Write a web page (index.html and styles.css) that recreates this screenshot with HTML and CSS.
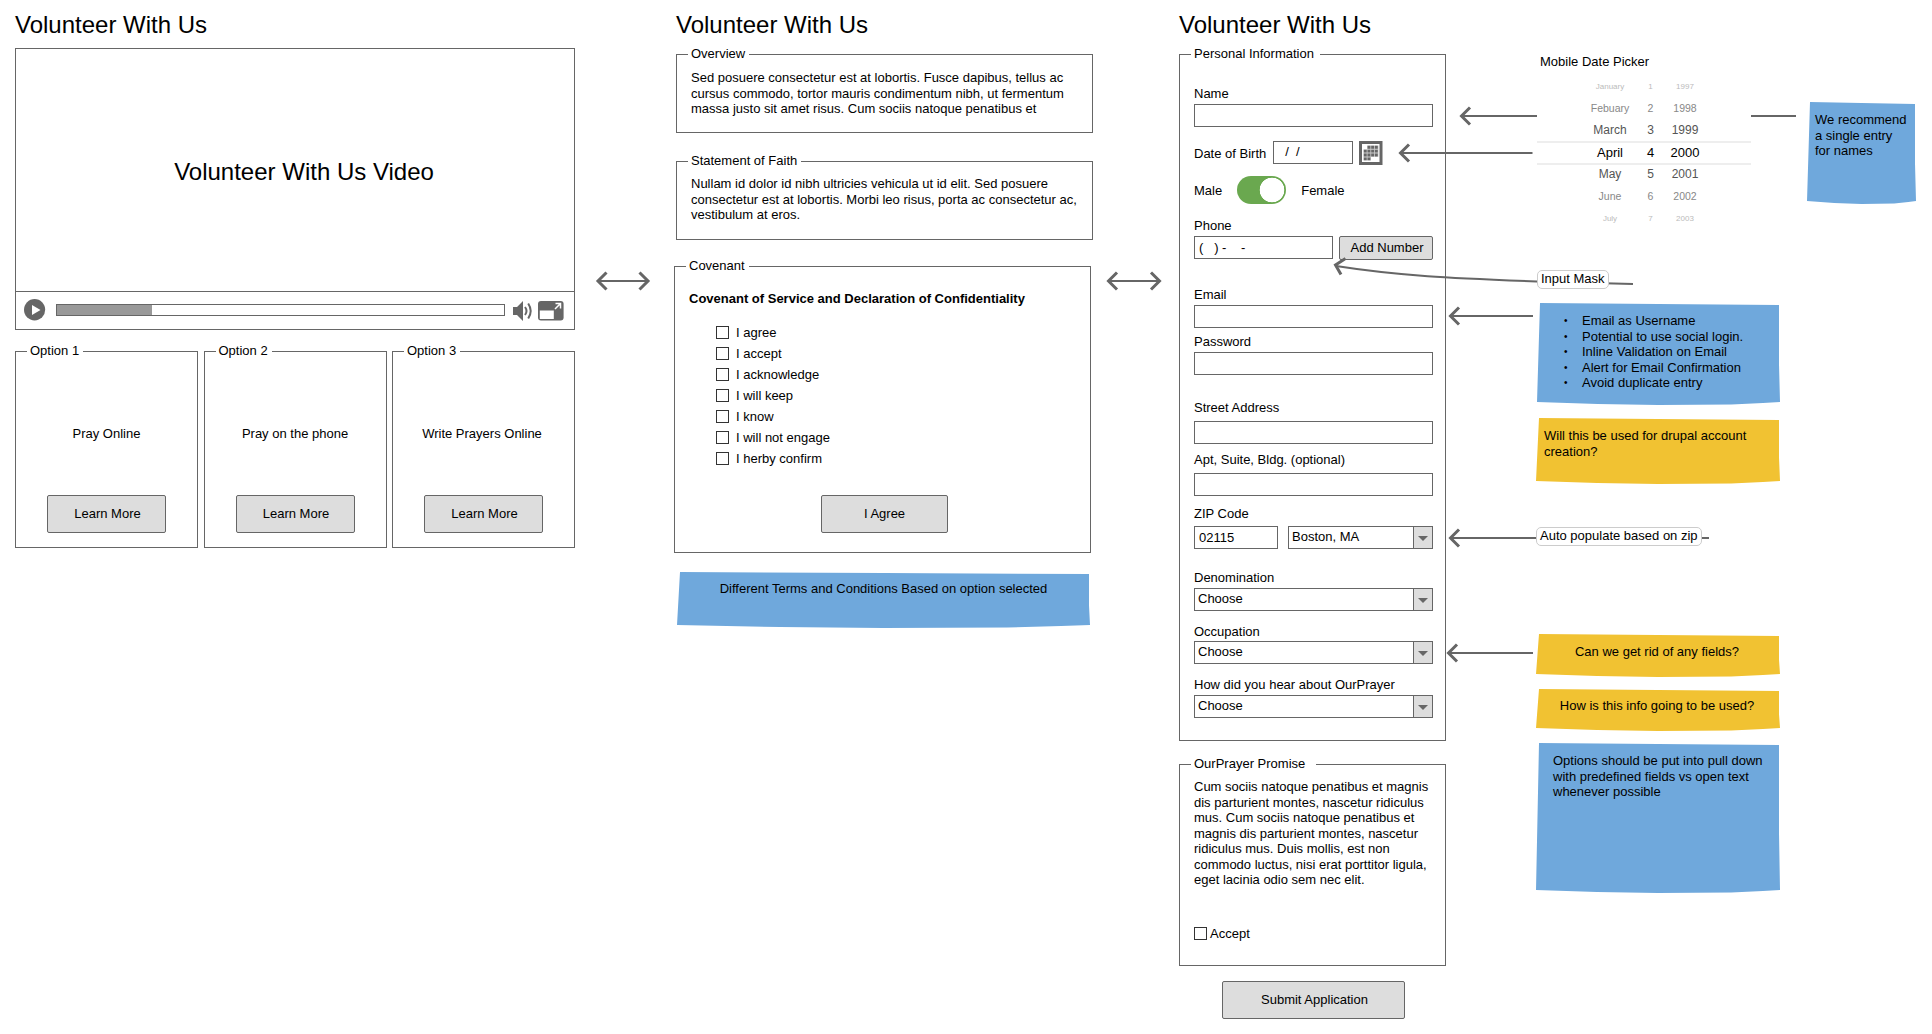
FILE: index.html
```html
<!DOCTYPE html>
<html lang="en">
<head>
<meta charset="utf-8">
<title>Volunteer With Us</title>
<link rel="stylesheet" href="styles.css">
</head>
<body>
<main class="board">

  <section class="col">
    <h1 class="title">Volunteer With Us</h1>
    <div class="video">
      <div class="video-screen">Volunteer With Us Video</div>
      <div class="video-bar">
        <svg class="play" width="22" height="22" viewBox="0 0 22 22"><ellipse cx="10.600" cy="10.700" rx="10.6" ry="10.7" fill="#666"/><path d="M8 6l8.5 5L8 16z" fill="#fff"/></svg>
        <div class="progress"><div class="progress-fill"></div></div>
        <svg class="speaker" width="21" height="20" viewBox="0 0 21 20"><path d="M0 6h4l6-6v20l-6-6H0z" fill="#666"/><path d="M12 6q3 4 0 8M15.200 2.500q5 7.500 0 15" fill="none" stroke="#666" stroke-width="2"/></svg>
        <svg class="expand" width="26" height="20" viewBox="0 0 26 20"><rect x="0" y="0" width="25.600" height="19.500" rx="3" fill="#666"/><path d="M1.800 9.500h14v8.500h-14z" fill="#fff"/><path d="M17.500 2.500h5v5M22 3l-5 5" fill="none" stroke="#fff" stroke-width="1.500"/></svg>
      </div>
    </div>
    <div class="options">
      <div class="frame option"><span class="legend">Option 1</span><p>Pray Online</p><button class="btn">Learn More</button></div>
      <div class="frame option"><span class="legend">Option 2</span><p>Pray on the phone</p><button class="btn">Learn More</button></div>
      <div class="frame option"><span class="legend">Option 3</span><p class="nudge">Write Prayers Online</p><button class="btn">Learn More</button></div>
    </div>
  </section>

  <section class="col">
    <h1 class="title title-mid">Volunteer With Us</h1>
    <div class="frame overview"><span class="legend">Overview</span>
      <p class="para">Sed posuere consectetur est at lobortis. Fusce dapibus, tellus ac<br>cursus commodo, tortor mauris condimentum nibh, ut fermentum<br>massa justo sit amet risus. Cum sociis natoque penatibus et</p>
    </div>
    <div class="frame faith"><span class="legend">Statement of Faith</span>
      <p class="para">Nullam id dolor id nibh ultricies vehicula ut id elit. Sed posuere<br>consectetur est at lobortis. Morbi leo risus, porta ac consectetur ac,<br>vestibulum at eros.</p>
    </div>
    <div class="frame covenant"><span class="legend">Covenant</span>
      <h2 class="covenant-title">Covenant of Service and Declaration of Confidentiality</h2>
      <ul class="checks">
        <li><i class="box"></i>I agree</li>
        <li><i class="box"></i>I accept</li>
        <li><i class="box"></i>I acknowledge</li>
        <li><i class="box"></i>I will keep</li>
        <li><i class="box"></i>I know</li>
        <li><i class="box"></i>I will not engage</li>
        <li><i class="box"></i>I herby confirm</li>
      </ul>
      <button class="btn btn-agree">I Agree</button>
    </div>
    <div class="note blue note-terms">Different Terms and Conditions Based on option selected</div>
  </section>

  <section class="col">
    <h1 class="title title-form">Volunteer With Us</h1>
    <div class="frame form"><span class="legend">Personal Information</span>
      <label>Name</label>
      <div class="input"></div>
      <div class="row dob">
        <label>Date of Birth</label>
        <div class="input date">  /  /</div>
        <svg class="calendar" width="24" height="24" viewBox="0 0 24 24"><rect x="1.500" y="1.500" width="20.500" height="21" fill="#fff" stroke="#666" stroke-width="3"/>
          <path d="M8.200 4.500h11.300v11.300h-7.500v3.700H4.500V8.300h3.700z" fill="#ccc"/>
          <path fill="#666" d="M8.500 4.800h2.900v2.900h-2.900zM12.200 4.800h2.900v2.900h-2.900zM15.900 4.800h2.900v2.900h-2.900zM4.800 8.700h2.900v2.900h-2.900zM8.500 8.700h2.900v2.900h-2.900zM12.200 8.700h2.900v2.900h-2.900zM15.900 8.700h2.900v2.900h-2.900zM4.800 12.600h2.900v2.900h-2.900zM8.500 12.600h2.900v2.900h-2.900zM12.200 12.600h2.900v2.900h-2.900zM15.900 12.600h2.900v2.900h-2.900zM4.800 16.400h2.900v2.900h-2.900zM8.500 16.400h2.900v2.900h-2.900z"/></svg>
      </div>
      <div class="row gender"><label>Male</label><div class="switch"></div><label>Female</label></div>
      <label>Phone</label>
      <div class="row phone"><div class="input">(   ) -    -</div><button class="btn btn-add">Add Number</button></div>
      <label class="l-email">Email</label>
      <div class="input"></div>
      <label class="l-password">Password</label>
      <div class="input"></div>
      <label class="l-street">Street Address</label>
      <div class="input roomy"></div>
      <label class="l-apt">Apt, Suite, Bldg. (optional)</label>
      <div class="input roomy"></div>
      <label class="l-zip">ZIP Code</label>
      <div class="row zip"><div class="input">02115</div><div class="select">Boston, MA<span class="drop"></span></div></div>
      <label class="l-denom">Denomination</label>
      <div class="select">Choose<span class="drop"></span></div>
      <label class="l-occ">Occupation</label>
      <div class="select tight">Choose<span class="drop"></span></div>
      <label class="l-occ">How did you hear about OurPrayer</label>
      <div class="select">Choose<span class="drop"></span></div>
    </div>
    <div class="frame promise"><span class="legend legend-wide">OurPrayer Promise</span>
      <p class="para">Cum sociis natoque penatibus et magnis<br>dis parturient montes, nascetur ridiculus<br>mus. Cum sociis natoque penatibus et<br>magnis dis parturient montes, nascetur<br>ridiculus mus. Duis mollis, est non<br>commodo luctus, nisi erat porttitor ligula,<br>eget lacinia odio sem nec elit.</p>
      <div class="accept"><i class="box"></i>Accept</div>
    </div>
    <button class="btn btn-submit">Submit Application</button>
  </section>

  <section class="col notes">
    <h3 class="picker-title">Mobile Date Picker</h3>
    <div class="picker">
      <div class="prow far"><span>January</span><span>1</span><span>1997</span></div>
      <div class="prow mid"><span>Febuary</span><span>2</span><span>1998</span></div>
      <div class="prow near"><span>March</span><span>3</span><span>1999</span></div>
      <div class="prow on"><span>April</span><span>4</span><span>2000</span></div>
      <div class="prow near"><span>May</span><span>5</span><span>2001</span></div>
      <div class="prow mid"><span>June</span><span>6</span><span>2002</span></div>
      <div class="prow far"><span>July</span><span>7</span><span>2003</span></div>
    </div>
    <div class="chip chip-mask">Input Mask</div>
    <div class="note blue note-email">
      <ul><li>Email as Username</li><li>Potential to use social login.</li><li>Inline Validation on Email</li><li>Alert for Email Confirmation</li><li>Avoid duplicate entry</li></ul>
    </div>
    <div class="note yellow note-drupal">Will this be used for drupal account<br>creation?</div>
    <div class="chip chip-zip">Auto populate based on zip</div>
    <div class="note yellow note-fields">Can we get rid of any fields?</div>
    <div class="note yellow note-info">How is this info going to be used?</div>
    <div class="note blue note-options">Options should be put into pull down<br>with predefined fields vs open text<br>whenever possible</div>
  </section>

  <section class="col">
    <div class="note blue note-names">We recommend<br>a single entry<br>for names</div>
  </section>

  <svg class="arrows" width="1932" height="1034" viewBox="0 0 1932 1034" fill="none" stroke="#666">
    <g stroke-width="2">
      <path d="M598 281h50M1109 281h51M1462 116h334M1401 153h131.500M1451 316h82M1451 538h258M1449 653h84"/>
      <path d="M1336 266C1400 276 1450 278 1537 281.500L1633 284"/>
    </g>
    <g stroke-width="3">
      <path d="M606.500 272.500L598 281l8.500 8.500M639.500 272.500L648 281l-8.500 8.500"/>
      <path d="M1117 272.500L1108.500 281l8.500 8.500M1151 272.500L1159.500 281l-8.500 8.500"/>
      <path d="M1470 107.500L1461.500 116l8.500 8.500M1409 144.500L1400.500 153l8.500 8.500"/>
      <path d="M1345.500 258.500L1335.500 265l5.500 9.500M1459 307.500L1450.500 316l8.500 8.500"/>
      <path d="M1459 529.500L1450.500 538l8.500 8.500M1457 644.500L1448.500 653l8.500 8.500"/>
    </g>
  </svg>
</main>
</body>
</html>
```
FILE: styles.css
```css
* { box-sizing: border-box; }
body { margin: 0; background: #fff; color: #000; font: 13px/15px "Liberation Sans", Arial, sans-serif; }
h1, h2, h3, p, ul { margin: 0; padding: 0; font-weight: normal; }
ul { list-style: none; }

.board {
  position: relative;
  display: grid;
  grid-template-columns: 659px 505px 357px 270px 1fr;
  width: 1932px;
  height: 1034px;
  padding-left: 15px;
  overflow: hidden;
  white-space: nowrap;
}
.col { display: flex; flex-direction: column; align-items: flex-start; }
.title { margin-top: 11px; font-size: 24px; line-height: 27px; }
.title-mid { margin-left: 2px; }

/* framed groups with a caption that sits on the border */
.frame { position: relative; border: 1px solid #666; }
.legend { position: absolute; top: -9px; left: 11px; padding: 0 4px 0 3px; background: #fff; }
.legend-wide { padding-right: 11px; }
.form .legend { padding-right: 6px; }
.promise .legend { padding-right: 11px; }
.para { line-height: 15.5px; }

.btn {
  display: block;
  height: 38px;
  padding: 0 0 2px;
  border: 1px solid #666;
  border-radius: 2px;
  background: #ddd;
  color: #000;
  font: inherit;
  text-align: center;
}

/* video player */
.video { width: 560px; height: 282px; margin-top: 10px; border: 1px solid #666; }
.video-screen { height: 243px; padding: 109px 0 0 18px; border-bottom: 1px solid #666; font-size: 24px; line-height: 27px; text-align: center; }
.video-bar { display: flex; align-items: flex-start; padding: 7px 0 0 8px; }
.progress { width: 449px; height: 12px; margin: 5px 0 0 10px; border: 1px solid #666; }
.progress-fill { width: 95px; height: 10px; background: #999; }
.speaker { margin: 2px 0 0 8px; }
.expand { margin: 2px 0 0 4px; }

.options { display: flex; justify-content: space-between; width: 560px; margin-top: 21px; }
.option { display: flex; flex-direction: column; align-items: center; width: 183px; height: 197px; padding-top: 74px; }
.option .btn { width: 119px; margin-top: 54px; padding-left: 2px; }
.nudge { margin-right: 3px; }

/* statements */
.overview, .faith { width: 417px; height: 79px; margin-left: 2px; padding-left: 14px; }
.overview { margin-top: 16px; padding-top: 15px; }
.faith { margin-top: 28px; padding-top: 14px; }
.covenant { width: 417px; height: 287px; margin-top: 26px; padding: 24px 0 0 14px; }
.covenant-title { font-size: 13px; line-height: 15px; font-weight: bold; }
.checks { margin: 20px 0 0 27px; }
.checks li { display: flex; height: 13px; margin-bottom: 8px; gap: 7px; line-height: 13px; }
.box { width: 13px; height: 13px; border: 1px solid #333; background: #fff; }
.btn-agree { width: 127px; margin: 30px 0 0 132px; }

/* sticky notes */
.note {
  line-height: 15.5px;
  clip-path: polygon(3px 0, 50% 1px, calc(100% - 1px) 2px, calc(100% - 1px) 60%, 100% calc(100% - 3px), 93% calc(100% - 2px), 80% calc(100% - 0.5px), 50% 100%, 25% calc(100% - 1px), 0 calc(100% - 3px));
}
.blue { background: #6fa8dc; }
.yellow { background: #f1c232; }
.note-terms { width: 413px; height: 56px; margin: 19px 0 0 3px; padding-top: 9px; text-align: center; }

/* form */
.form { width: 267px; height: 687px; margin-top: 16px; padding: 31px 12px 0 14px; }
.form label { display: block; height: 15px; }
.row { display: flex; }
.input, .select { height: 23px; margin-top: 3px; border: 1px solid #666; background: #fff; white-space: pre; }
.input { padding: 3px 4px; }
.select { position: relative; padding: 2px 3px; }
.roomy { margin-top: 6px; }
.tight { margin-top: 2px; }
.drop { position: absolute; top: 0; right: 0; width: 19px; height: 21px; border-left: 1px solid #666; background: #ddd; }
.drop::after { content: ""; position: absolute; left: 4px; top: 9px; border: 5px solid transparent; border-top-color: #666; border-bottom: 0; }
.dob { height: 24px; margin-top: 14px; }
.dob label { width: 79px; margin-top: 5px; }
.dob .input { width: 80px; margin: 0 6px 0 0; padding-top: 2px; }
.gender { height: 28px; margin: 11px 0 14px; }
.gender label { margin-top: 7px; }
.switch { width: 49px; height: 28px; margin: 0 15px; border-radius: 14px; background: radial-gradient(circle at 35px 14px, #fff 12px, #6aa84f 12.6px); }
.phone { gap: 6px; margin-top: 3px; }
.phone .input { width: 139px; margin: 0; }
.btn-add { width: 94px; height: 24px; padding: 0 0 2px 2px; }
.l-email { margin-top: 27px; }
.l-password { margin-top: 6px; }
.l-street { margin-top: 25px; }
.l-apt { margin-top: 8px; }
.l-zip { margin-top: 10px; }
.l-denom { margin-top: 21px; }
.l-occ { margin-top: 13px; }
.zip { gap: 10px; margin-top: 5px; }
.zip .input { width: 84px; margin: 0; }
.zip .select { width: 145px; margin: 0; }

.promise { width: 267px; height: 202px; margin-top: 23px; padding: 14px 0 0 14px; }
.accept { display: flex; gap: 3px; margin-top: 39px; line-height: 13px; }
.btn-submit { width: 183px; margin: 15px 0 0 43px; padding-left: 2px; }

/* annotations, stacked above the connector lines */
.notes { position: relative; z-index: 2; }
.picker-title { margin: 54px 0 0 4px; font-size: 13px; }
.picker { width: 214px; height: 156px; margin: 7px 0 0 1px; background: #fff; }
.prow { display: grid; grid-template-columns: 72px 9px 60px; justify-content: start; height: 22px; padding-left: 37px; line-height: 22px; text-align: center; }
.far { font-size: 8px; color: #bbb; }
.mid { font-size: 10.5px; line-height: 20px; color: #888; }
.near { font-size: 12px; line-height: 20px; color: #555; }
.on { height: 24px; margin: -1px 0; border: solid #eee; border-width: 2px 0; line-height: 19px; }
.chip { height: 19px; padding: 0 3px; border: 1px solid #ccc; border-radius: 5px; background: #fff; }
.chip-mask { margin: 38px 0 0 1px; }
.note-email { width: 243px; height: 102px; margin: 14px 0 0 1px; padding: 10px 0 0 45px; }
.note-email li::before { content: "•"; position: absolute; margin-left: -18px; font-size: 10px; }
.note-drupal { width: 244px; height: 66px; margin-top: 13px; padding: 10px 0 0 8px; }
.chip-zip { margin-top: 43px; }
.note-fields { width: 244px; height: 43px; margin-top: 88px; padding: 10px 2px 0 0; text-align: center; }
.note-info { width: 244px; height: 42px; margin-top: 12px; padding: 9px 2px 0 0; text-align: center; }
.note-options { width: 244px; height: 150px; margin-top: 12px; padding: 10px 0 0 17px; }
.note-names { width: 109px; height: 102px; margin: 102px 0 0 1px; padding: 10px 0 0 8px; }

.arrows { position: absolute; top: 0; left: 0; z-index: 1; pointer-events: none; }
```
